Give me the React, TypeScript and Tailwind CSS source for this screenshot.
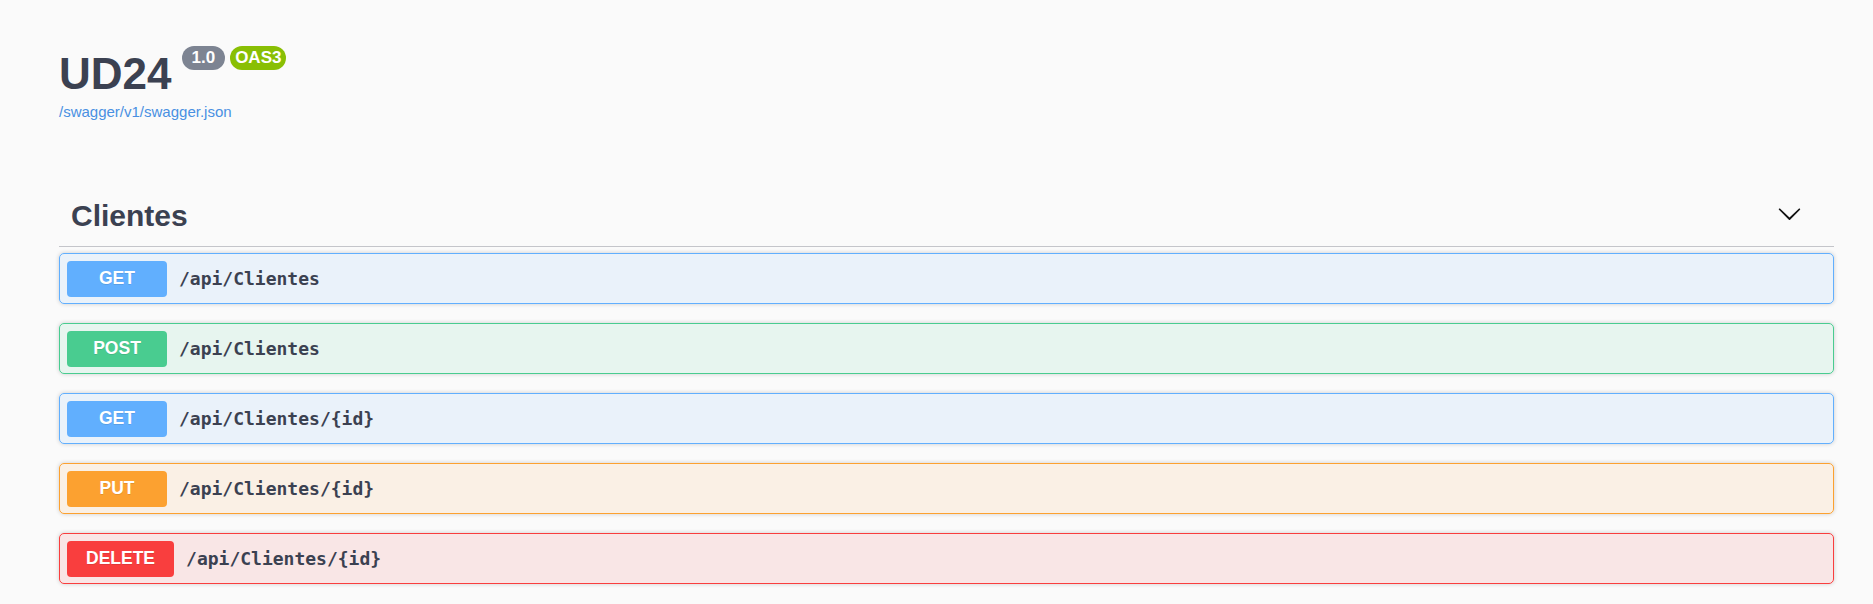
const endpoints = [
  { method: "GET", path: "/api/Clientes" },
  { method: "POST", path: "/api/Clientes" },
  { method: "GET", path: "/api/Clientes/{id}" },
  { method: "PUT", path: "/api/Clientes/{id}" },
  { method: "DELETE", path: "/api/Clientes/{id}" },
];

const styles: Record<string, { block: string; badge: string }> = {
  GET: { block: "border-[#61affe] bg-[#61affe]/10", badge: "bg-[#61affe]" },
  POST: { block: "border-[#49cc90] bg-[#49cc90]/10", badge: "bg-[#49cc90]" },
  PUT: { block: "border-[#fca130] bg-[#fca130]/10", badge: "bg-[#fca130]" },
  DELETE: { block: "border-[#f93e3e] bg-[#f93e3e]/10", badge: "bg-[#f93e3e]" },
};

const Chevron = () => (
  <svg width="25" height="25" viewBox="0 0 20 20" className="fill-[#111]">
    <path d="M17.418 6.109c.272-.268.709-.268.979 0s.271.701 0 .969l-7.908 7.83c-.27.268-.707.268-.979 0l-7.908-7.83c-.27-.268-.27-.701 0-.969.271-.268.709-.268.979 0L10 13.25l7.418-7.141z" />
  </svg>
);

const App = () => {
  return (
    <div className="min-h-screen bg-[#fafafa] pl-[59px] pr-[39px] pt-[48px] font-['Liberation_Sans',Arial,sans-serif] text-[#3b4151]">
      {/* info */}
      <div className="flex items-start">
        <h2 className="text-[44px] leading-[52px] font-bold">UD24</h2>
        <div className="flex gap-[5px] ml-[10px] -mt-[2px]">
          <span className="rounded-full bg-[#7d8492] px-[10px] py-[2px] text-[17px] leading-[20px] font-bold text-white">
            1.0
          </span>
          <span className="rounded-full bg-[#89bf04] px-[5px] py-[2px] text-[17px] leading-[20px] font-bold text-white">
            OAS3
          </span>
        </div>
      </div>
      <a href="#" className="block mt-[3px] text-[15px] leading-[18px] text-[#4990e2]">
        /swagger/v1/swagger.json
      </a>

      {/* tag section */}
      <div className="mt-[59px]">
        <div className="flex items-center h-[67px] border-b border-[#c4c5ca] pl-[12px] pr-[32px]">
          <h3 className="flex-1 mt-[5px] text-[30px] leading-[34px] font-bold">Clientes</h3>
          <Chevron />
        </div>
        <div className="mt-[6px]">
          {endpoints.map((e, i) => (
            <div
              key={i}
              className={`flex items-center h-[51px] mb-[19px] px-[7px] border rounded-[5px] shadow-[0_0_4px_rgba(0,0,0,0.19)] ${styles[e.method].block}`}
            >
              <div
                className={`min-w-[100px] h-[36px] px-[19px] flex items-center justify-center rounded-[4px] text-[17.5px] font-bold text-white [text-shadow:0_1px_0_rgba(0,0,0,0.1)] ${styles[e.method].badge}`}
              >
                {e.method}
              </div>
              <span className="px-[12px] font-['DejaVu_Sans_Mono',monospace] text-[18px] font-bold text-[#3b4151]">
                {e.path}
              </span>
            </div>
          ))}
        </div>
      </div>
    </div>
  );
};

export default App;
